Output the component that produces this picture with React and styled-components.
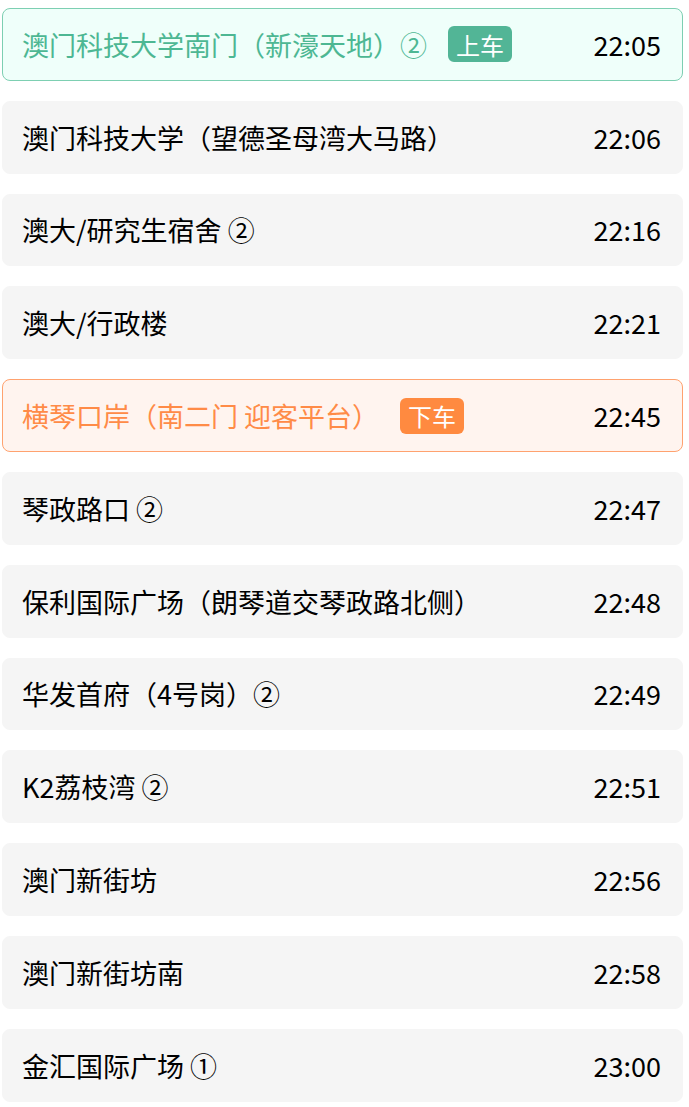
import React from 'react'
import styled, { createGlobalStyle, css } from 'styled-components'

const GlobalStyle = createGlobalStyle`
  body {
    margin: 0;
    background: #fff;
    font-family: "Noto Sans CJK SC", "Noto Sans", sans-serif;
  }
`

const tones = {
  board: { text: '#4db793', badge: '#52b596', border: '#7dcfb2', bg: '#effffa' },
  alight: { text: '#ff8b47', badge: '#ff8a40', border: '#ffa26f', bg: '#fff4ef' },
}

const List = styled.div`
  display: flex;
  flex-direction: column;
  gap: 20px;
  padding: 8px 6px 8px 2px;
`

const Row = styled.div`
  box-sizing: border-box;
  height: 72.8px;
  display: flex;
  align-items: center;
  justify-content: space-between;
  padding: 0 21px 0 19px;
  border-radius: 8px;
  background: #f5f5f5;
  border: 1px solid #f5f5f5;
  ${p => p.$tone && css`
    background: ${tones[p.$tone].bg};
    border-color: ${tones[p.$tone].border};
  `}
`

const Left = styled.div`
  display: flex;
  align-items: center;
  gap: 21px;
`

const Name = styled.span`
  font-size: 27px;
  color: ${p => (p.$tone ? tones[p.$tone].text : '#000')};
  white-space: nowrap;
`

const Badge = styled.span`
  display: inline-flex;
  align-items: center;
  justify-content: center;
  height: 36px;
  padding: 0 8px;
  border-radius: 6px;
  font-size: 24px;
  color: #fff;
  background: ${p => tones[p.$tone].badge};
`

const Time = styled.span`
  font-size: 27px;
  color: #000;
`

const stops = [
  { name: '澳门科技大学南门（新濠天地）②', time: '22:05', tone: 'board', badge: '上车' },
  { name: '澳门科技大学（望德圣母湾大马路）', time: '22:06' },
  { name: '澳大/研究生宿舍 ②', time: '22:16' },
  { name: '澳大/行政楼', time: '22:21' },
  { name: '横琴口岸（南二门 迎客平台）', time: '22:45', tone: 'alight', badge: '下车' },
  { name: '琴政路口 ②', time: '22:47' },
  { name: '保利国际广场（朗琴道交琴政路北侧）', time: '22:48' },
  { name: '华发首府（4号岗）②', time: '22:49' },
  { name: 'K2荔枝湾 ②', time: '22:51' },
  { name: '澳门新街坊', time: '22:56' },
  { name: '澳门新街坊南', time: '22:58' },
  { name: '金汇国际广场 ①', time: '23:00' },
]

const App = () => {
  return (
    <>
      <GlobalStyle />
      <List>
        {stops.map(s => (
          <Row key={s.name} $tone={s.tone}>
            <Left>
              <Name $tone={s.tone}>{s.name}</Name>
              {s.badge && <Badge $tone={s.tone}>{s.badge}</Badge>}
            </Left>
            <Time>{s.time}</Time>
          </Row>
        ))}
      </List>
    </>
  )
}

export default App
